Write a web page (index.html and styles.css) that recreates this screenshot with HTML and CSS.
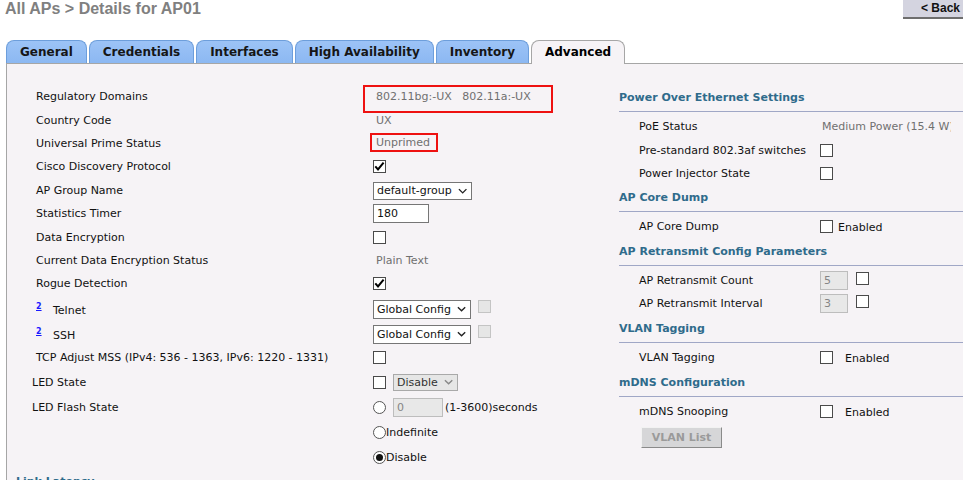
FILE: index.html
```html
<!DOCTYPE html>
<html>
<head>
<meta charset="utf-8">
<link rel="stylesheet" href="styles.css">
</head>
<body>
<div class="page">
  <div class="header">
    <h1 class="title">All APs &gt; Details for AP01</h1>
    <button class="back">&lt; Back</button>
  </div>
  <div class="tabs">
    <div class="tab">General</div>
    <div class="tab">Credentials</div>
    <div class="tab">Interfaces</div>
    <div class="tab">High Availability</div>
    <div class="tab">Inventory</div>
    <div class="tab active">Advanced</div>
  </div>
  <div class="panel">
    <div class="left">
      <div class="row"><div class="lbl">Regulatory Domains</div><div class="val"><span class="redbox rb1">802.11bg:-UX&nbsp;&nbsp; 802.11a:-UX</span></div></div>
      <div class="row"><div class="lbl">Country Code</div><div class="val"><span class="txt">UX</span></div></div>
      <div class="row"><div class="lbl">Universal Prime Status</div><div class="val"><span class="redbox rb2">Unprimed</span></div></div>
      <div class="row"><div class="lbl">Cisco Discovery Protocol</div><div class="val"><span class="cb"><svg viewBox="0 0 13 13" width="13" height="13"><path d="M2.3 6.4 L5 9.4 L10.6 2.6" fill="none" stroke="#000" stroke-width="2"/></svg></span></div></div>
      <div class="row"><div class="lbl">AP Group Name</div><div class="val"><span class="sel sel-group">default-group<svg class="chev" viewBox="0 0 10 6" width="10" height="6"><polyline points="1,1 5,5 9,1" fill="none" stroke="#222" stroke-width="1.5"/></svg></span></div></div>
      <div class="row"><div class="lbl">Statistics Timer</div><div class="val"><span class="inp inp-timer">180</span></div></div>
      <div class="row"><div class="lbl">Data Encryption</div><div class="val"><span class="cb"></span></div></div>
      <div class="row"><div class="lbl">Current Data Encryption Status</div><div class="val"><span class="txt">Plain Text</span></div></div>
      <div class="row"><div class="lbl">Rogue Detection</div><div class="val"><span class="cb"><svg viewBox="0 0 13 13" width="13" height="13"><path d="M2.3 6.4 L5 9.4 L10.6 2.6" fill="none" stroke="#000" stroke-width="2"/></svg></span></div></div>
      <div class="row r-telnet"><div class="lbl"><a class="fn">2</a>Telnet</div><div class="val"><span class="sel sel-global">Global Config<svg class="chev" viewBox="0 0 10 6" width="10" height="6"><polyline points="1,1 5,5 9,1" fill="none" stroke="#222" stroke-width="1.5"/></svg></span><span class="cb dis up"></span></div></div>
      <div class="row r-ssh"><div class="lbl"><a class="fn">2</a>SSH</div><div class="val"><span class="sel sel-global">Global Config<svg class="chev" viewBox="0 0 10 6" width="10" height="6"><polyline points="1,1 5,5 9,1" fill="none" stroke="#222" stroke-width="1.5"/></svg></span><span class="cb dis up"></span></div></div>
      <div class="row r24"><div class="lbl">TCP Adjust MSS (IPv4: 536 - 1363, IPv6: 1220 - 1331)</div><div class="val"><span class="cb"></span></div></div>
      <div class="row r25"><div class="lbl out">LED State</div><div class="val"><span class="cb"></span><span class="sel sel-dis">Disable<svg class="chev" viewBox="0 0 10 6" width="10" height="6"><polyline points="1,1 5,5 9,1" fill="none" stroke="#888" stroke-width="1.5"/></svg></span></div></div>
      <div class="row r25"><div class="lbl out">LED Flash State</div><div class="val"><span class="rad"></span><span class="inp inp-dis inp-flash">0</span><span class="plain">(1-3600)seconds</span></div></div>
      <div class="row r25"><div class="lbl"></div><div class="val"><span class="rad"></span><span class="plain tight">Indefinite</span></div></div>
      <div class="row r25"><div class="lbl"></div><div class="val"><span class="rad on"></span><span class="plain tight">Disable</span></div></div>
      <div class="sec sec-left">Link Latency</div>
    </div>
    <div class="right">
      <div class="sec">Power Over Ethernet Settings</div>
      <div class="rrow"><div class="rlbl">PoE Status</div><div class="rval clip"><span class="txt">Medium Power (15.4 W)</span></div></div>
      <div class="rrow r24"><div class="rlbl">Pre-standard 802.3af switches</div><div class="rval"><span class="cb"></span></div></div>
      <div class="rrow r22"><div class="rlbl">Power Injector State</div><div class="rval"><span class="cb"></span></div></div>
      <div class="sec">AP Core Dump</div>
      <div class="rrow"><div class="rlbl">AP Core Dump</div><div class="rval"><span class="cb"></span><span class="en en-near">Enabled</span></div></div>
      <div class="sec">AP Retransmit Config Parameters</div>
      <div class="rrow"><div class="rlbl">AP Retransmit Count</div><div class="rval"><span class="inp inp-dis inp-rt">5</span><span class="cb up gap8"></span></div></div>
      <div class="rrow"><div class="rlbl">AP Retransmit Interval</div><div class="rval"><span class="inp inp-dis inp-rt">3</span><span class="cb up gap8"></span></div></div>
      <div class="sec">VLAN Tagging</div>
      <div class="rrow"><div class="rlbl">VLAN Tagging</div><div class="rval"><span class="cb"></span><span class="en">Enabled</span></div></div>
      <div class="sec">mDNS Configuration</div>
      <div class="rrow"><div class="rlbl">mDNS Snooping</div><div class="rval"><span class="cb"></span><span class="en">Enabled</span></div></div>
      <button class="vlan">VLAN List</button>
    </div>
  </div>
</div>
</body>
</html>
```

FILE: styles.css
```css
html, body {
  margin: 0;
  padding: 0;
  overflow: hidden;
  background: #ffffff;
}
body {
  font-family: "DejaVu Sans", Verdana, sans-serif;
  font-size: 11px;
  color: #111111;
}
.page {
  width: 1000px;
}
.header {
  display: flex;
  justify-content: space-between;
  align-items: flex-start;
  height: 40px;
}
.title {
  margin: 0 0 0 5px;
  font: bold 16px/18px "Liberation Sans", Arial, sans-serif;
  color: #808080;
}
.back {
  width: 97px;
  height: 19px;
  margin: 0;
  padding: 0 0 0 18px;
  text-align: left;
  border: none;
  border-bottom: 2px solid #6e6e6e;
  background: #d4d4e0;
  font: bold 12px/17px "Liberation Sans", Arial, sans-serif;
  color: #111;
}
.tabs {
  display: flex;
  align-items: flex-end;
  margin-left: 6px;
  height: 23px;
  position: relative;
  z-index: 1;
}
.tab {
  height: 22px;
  line-height: 22px;
  padding: 0 13px;
  margin-right: 2px;
  border: 1px solid #6d9edb;
  border-bottom: none;
  border-radius: 8px 8px 0 0;
  background: linear-gradient(#9cc3f6, #8cb8f2);
  font-weight: bold;
  font-size: 12px;
  color: #161616;
}
.tab.active {
  height: 23px;
  margin-bottom: -1px;
  background: #f6f3f6;
  border-color: #a6a6a6;
  color: #000;
}
.panel {
  display: flex;
  margin-left: 6px;
  border-top: 1px solid #a6a6a6;
  border-left: 1px solid #a6a6a6;
  background: #f6f3f6;
  height: 480px;
}
.left {
  box-sizing: border-box;
  width: 612px;
  padding: 21px 0 0 29px;
}
.row {
  display: grid;
  grid-template-columns: 337px auto;
  grid-template-rows: 100%;
  align-items: center;
  height: 23.4px;
}
.row.r-telnet { height: 27px; }
.row.r-ssh { height: 23px; }
.row.r24 { height: 24px; }
.row.r25 { height: 25px; }
.lbl {
  white-space: nowrap;
  color: #111;
}
.lbl.out { margin-left: -4px; }
.fn {
  display: inline-block;
  width: 17px;
  font-size: 8px;
  font-weight: bold;
  color: #1a1aff;
  text-decoration: underline;
  vertical-align: 5px;
}
.val {
  display: flex;
  align-items: center;
  white-space: nowrap;
}
.txt {
  padding-left: 3px;
  color: #707070;
}
.plain {
  margin-left: 2px;
  color: #111;
}
.plain.tight { margin-left: 0; }
.redbox {
  display: inline-block;
  border: 2px solid #ee1111;
  color: #707070;
}
.rb1 {
  line-height: 14px;
  padding: 3px 20px 7px 11px;
  margin: -1px 0 -5px -10px;
}
.rb2 {
  line-height: 15px;
  padding: 0 6px 0 4px;
  margin: -1px 0 0 -3px;
}
.cb {
  box-sizing: border-box;
  display: inline-block;
  width: 13px;
  height: 13px;
  border: 1px solid #4a4a4a;
  background: #fff;
  position: relative;
}
.cb svg {
  position: absolute;
  left: -1px;
  top: -1px;
}
.cb.dis {
  border-color: #c4c4c4;
  background: #e6e6e6;
  margin-left: 7px;
}
.cb.up { margin-top: -5px; }
.cb.gap8 { margin-left: 8px; }
.rad {
  box-sizing: border-box;
  display: inline-block;
  width: 13px;
  height: 13px;
  border: 1px solid #555;
  border-radius: 50%;
  background: #fff;
  position: relative;
}
.rad.on::after {
  content: "";
  position: absolute;
  left: 2px;
  top: 2px;
  width: 7px;
  height: 7px;
  border-radius: 50%;
  background: #111;
}
.sel {
  box-sizing: border-box;
  display: inline-flex;
  align-items: center;
  justify-content: space-between;
  border: 1px solid #767676;
  background: #fff;
  color: #111;
  padding: 0 4px 0 3px;
}
.chev { margin-left: 6px; }
.sel-group { width: 99px; height: 18px; margin-top: 1px; }
.sel-global { width: 98px; height: 19px; }
.sel-dis {
  width: 65px;
  height: 17px;
  margin-left: 7px;
  background: #e6e6e6;
  border-color: #a9a9a9;
  color: #333;
}
.inp {
  box-sizing: border-box;
  display: inline-block;
  height: 19px;
  line-height: 17px;
  border: 1px solid #767676;
  background: #fff;
  padding-left: 3px;
  color: #111;
}
.inp-timer { width: 56px; }
.inp-dis {
  background: #e8e8e8;
  border-color: #bdbdbd;
  color: #858585;
}
.inp-flash { width: 50px; margin-left: 7px; }
.inp-rt { width: 28px; }
.sec {
  font-weight: bold;
  color: #2f6b8b;
  line-height: 16px;
  padding-bottom: 5px;
  border-bottom: 1px solid #a0a7c6;
  margin: 6px 0 3px;
  white-space: nowrap;
}
.sec-left {
  margin: 4px 0 0 -20px;
  border-bottom: none;
}
.right {
  flex: 1;
  padding-top: 20px;
}
.rrow {
  display: grid;
  grid-template-columns: 201px auto;
  grid-template-rows: 100%;
  align-items: center;
  height: 23px;
}
.rrow.r24 { height: 24px; }
.rrow.r22 { height: 22px; }
.rlbl {
  padding-left: 20px;
  white-space: nowrap;
  color: #111;
}
.rval {
  display: flex;
  align-items: center;
  white-space: nowrap;
}
.rval.clip {
  width: 131px;
  overflow: hidden;
}
.rval .txt { padding-left: 2px; }
.en { margin-left: 12px; margin-top: 2px; color: #111; }
.en.en-near { margin-left: 5px; }
.vlan {
  display: block;
  margin: 4px 0 0 22px;
  width: 81px;
  height: 21px;
  padding: 0;
  background: #d6d6d8;
  border: 1px solid;
  border-color: #f2f2f2 #8a8a8a #8a8a8a #f2f2f2;
  font: bold 11px/19px "DejaVu Sans", Verdana, sans-serif;
  color: #9a9a9a;
}
```
